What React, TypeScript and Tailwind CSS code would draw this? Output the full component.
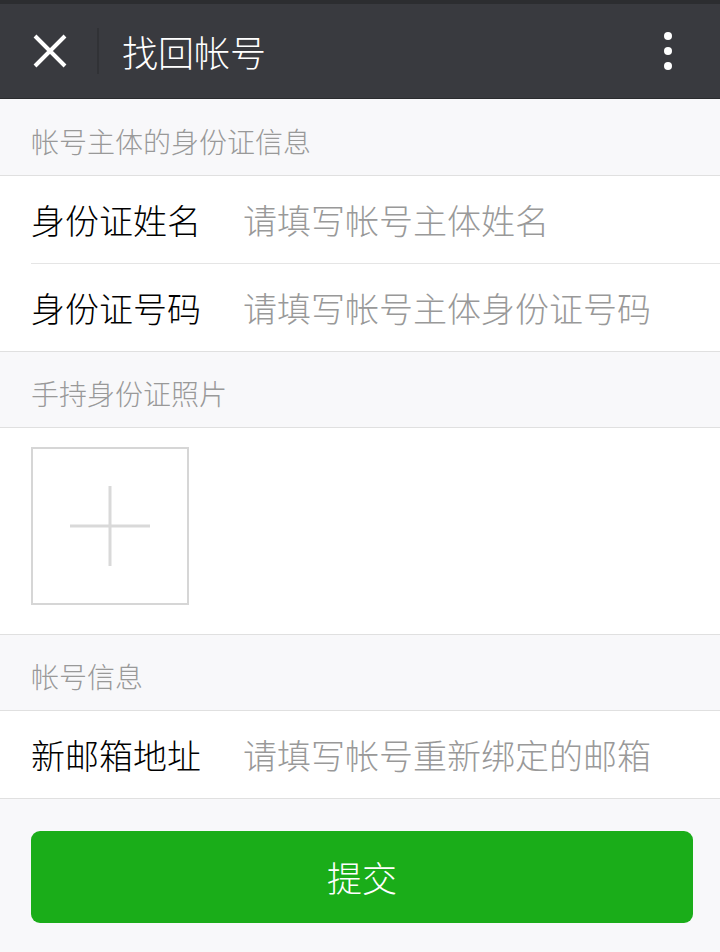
import React from "react";

const font = { fontFamily: '"Noto Sans CJK SC", "Noto Sans", sans-serif' };

function SectionTitle({ children, tall }: { children: React.ReactNode; tall?: boolean }) {
  return (
    <div
      className={
        "flex items-center px-[31px] pt-[7px] text-[28px] font-light text-[#999999] " +
        (tall ? "h-[76px]" : "h-[75px]")
      }
    >
      {children}
    </div>
  );
}

function Field({ label, placeholder, last }: { label: string; placeholder: string; last?: boolean }) {
  return (
    <div className="pl-[31px]">
      <div className={"flex items-center " + (last ? "h-[87px]" : "h-[88px] border-b border-[#e5e5e5]")}>
        <span className="w-[212px] shrink-0 text-[34px] font-light text-[#000000]">{label}</span>
        <span className="text-[34px] font-light text-[#999999]">{placeholder}</span>
      </div>
    </div>
  );
}

export default function App() {
  return (
    <div className="flex h-[952px] w-[720px] flex-col bg-[#f8f8fa]" style={font}>
      <div className="h-[4px] bg-[#2c2d30]" />
      <header className="flex h-[95px] items-center border-b border-[#2a2b2e] bg-[#393a3f]">
        <div className="flex w-[97px] justify-center pl-[2px]">
          <svg width="34" height="34" viewBox="0 0 34 34">
            <path d="M2 2 L32 32 M32 2 L2 32" stroke="#fff" strokeWidth="4" strokeLinecap="butt" />
          </svg>
        </div>
        <div className="h-[46px] w-[2px] bg-[#313236]" />
        <h1 className="ml-[23px] text-[36px] font-light text-white">找回帐号</h1>
        <div className="ml-auto mr-[48px] flex flex-col gap-[7px]">
          <span className="h-[8px] w-[8px] rounded-full bg-white" />
          <span className="h-[8px] w-[8px] rounded-full bg-white" />
          <span className="h-[8px] w-[8px] rounded-full bg-white" />
        </div>
      </header>

      <SectionTitle tall>帐号主体的身份证信息</SectionTitle>
      <div className="border-y border-[#e0e0e0] bg-white">
        <Field label="身份证姓名" placeholder="请填写帐号主体姓名" />
        <Field label="身份证号码" placeholder="请填写帐号主体身份证号码" last />
      </div>

      <SectionTitle>手持身份证照片</SectionTitle>
      <div className="border-y border-[#e0e0e0] bg-white px-[31px] pb-[29px] pt-[19px]">
        <div className="flex h-[158px] w-[158px] items-center justify-center border-2 border-[#d6d6d6]">
          <svg width="82" height="82" viewBox="0 0 82 82">
            <path d="M41 1 V81 M1 41 H81" stroke="#d9d9d9" strokeWidth="3" />
          </svg>
        </div>
      </div>

      <SectionTitle>帐号信息</SectionTitle>
      <div className="border-y border-[#e0e0e0] bg-white">
        <Field label="新邮箱地址" placeholder="请填写帐号重新绑定的邮箱" last />
      </div>

      <div className="pl-[31px] pr-[27px] pt-[32px]">
        <button className="flex h-[92px] w-full items-center justify-center rounded-[9px] bg-[#1aad19] text-[35px] font-light text-white">
          提交
        </button>
      </div>
    </div>
  );
}
